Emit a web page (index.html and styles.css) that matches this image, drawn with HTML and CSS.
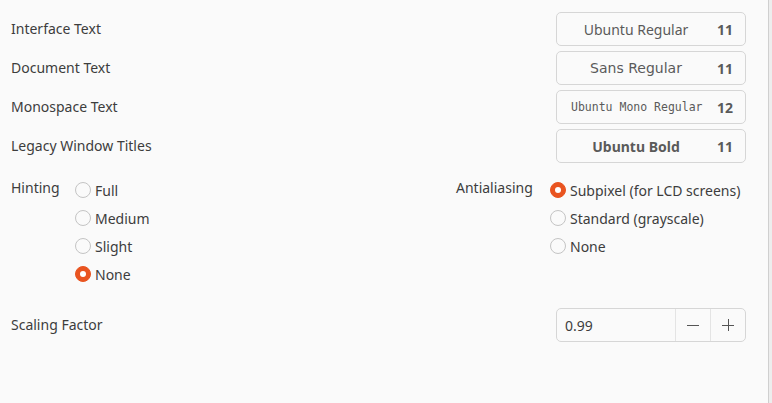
FILE: index.html
```html
<!DOCTYPE html>
<html>
<head>
<meta charset="utf-8">
<link rel="stylesheet" href="styles.css">
</head>
<body>
<div class="page">
  <div class="content">
    <div class="fonts">
      <div class="row">
        <span class="label">Interface Text</span>
        <button class="fontbtn"><span class="fname f-ui">Ubuntu Regular</span><span class="fsize">11</span></button>
      </div>
      <div class="row">
        <span class="label">Document Text</span>
        <button class="fontbtn"><span class="fname f-sans">Sans Regular</span><span class="fsize">11</span></button>
      </div>
      <div class="row">
        <span class="label">Monospace Text</span>
        <button class="fontbtn"><span class="fname f-mono">Ubuntu Mono Regular</span><span class="fsize">12</span></button>
      </div>
      <div class="row">
        <span class="label">Legacy Window Titles</span>
        <button class="fontbtn"><span class="fname f-bold">Ubuntu Bold</span><span class="fsize">11</span></button>
      </div>
    </div>
    <div class="options">
      <div class="group hinting">
        <span class="glabel">Hinting</span>
        <div class="radios">
          <label class="radio"><span class="dot"></span>Full</label>
          <label class="radio"><span class="dot"></span>Medium</label>
          <label class="radio"><span class="dot"></span>Slight</label>
          <label class="radio"><span class="dot on"></span>None</label>
        </div>
      </div>
      <div class="group aa">
        <span class="glabel">Antialiasing</span>
        <div class="radios">
          <label class="radio"><span class="dot on"></span>Subpixel (for LCD screens)</label>
          <label class="radio"><span class="dot"></span>Standard (grayscale)</label>
          <label class="radio"><span class="dot"></span>None</label>
        </div>
      </div>
    </div>
    <div class="row scale">
      <span class="label">Scaling Factor</span>
      <div class="spin">
        <span class="value">0.99</span>
        <span class="sbtn"><svg width="12" height="12" viewBox="0 0 12 12"><path d="M0 6.5h12" stroke="#555" stroke-width="1"/></svg></span>
        <span class="sbtn"><svg width="12" height="12" viewBox="0 0 12 12"><path d="M0 6.5h12M6.5 0v12" stroke="#555" stroke-width="1"/></svg></span>
      </div>
    </div>
  </div>
  <div class="edge"></div>
</div>
</body>
</html>
```
FILE: styles.css
```css
html, body {
  margin: 0;
  padding: 0;
}
body {
  background: #fafafa;
  font-family: "Noto Sans", "Open Sans", sans-serif;
  font-size: 14px;
  color: #3d3d3d;
  width: 772px;
  height: 403px;
  overflow: hidden;
}
.page {
  display: flex;
  height: 403px;
}
.content {
  width: 768px;
  box-sizing: border-box;
  padding: 12px 22px 0 11px;
}
.edge {
  width: 3px;
  border-left: 1px solid #cfcfcf;
  background: #ededed;
}
.fonts {
  display: flex;
  flex-direction: column;
  gap: 5px;
}
.row {
  display: flex;
  justify-content: space-between;
  align-items: center;
  height: 34px;
}
.label {
  line-height: 20px;
}
.fontbtn {
  width: 190px;
  height: 34px;
  box-sizing: border-box;
  border: 1px solid #d6d6d6;
  border-radius: 5px;
  background: #fafafa;
  display: flex;
  align-items: center;
  justify-content: flex-end;
  padding: 0 12px 0 10px;
  gap: 0;
  color: #5a5a5a;
  font-family: "Noto Sans", sans-serif;
  font-size: 14px;
}
.fname {
  flex: 1;
  text-align: center;
  padding-right: 8px;
}
.f-sans {
  font-family: "DejaVu Sans", sans-serif;
  font-size: 14px;
}
.f-mono {
  font-family: "DejaVu Sans Mono", monospace;
  font-size: 11.5px;
  text-align: left;
  padding-left: 4px;
}
.f-bold {
  font-weight: bold;
}
.fsize {
  font-weight: bold;
  width: 20px;
  text-align: right;
}
.options {
  display: flex;
  margin-top: 17px;
}
.group {
  display: flex;
  align-items: flex-start;
}
.hinting {
  width: 445px;
}
.glabel {
  line-height: 20px;
  margin-top: -2px;
}
.hinting .glabel {
  width: 64px;
}
.aa .glabel {
  width: 94px;
}
.radios {
  display: flex;
  flex-direction: column;
  gap: 8px;
}
.radio {
  display: flex;
  align-items: center;
  height: 20px;
  gap: 4px;
}
.dot {
  width: 16px;
  height: 16px;
  box-sizing: border-box;
  border: 1px solid #c4c4c4;
  border-radius: 50%;
  background: #fafafa;
  display: inline-flex;
  align-items: center;
  justify-content: center;
}
.dot.on {
  border-color: #e95420;
  background: #e95420;
}
.dot.on::after {
  content: "";
  width: 6px;
  height: 6px;
  border-radius: 50%;
  background: #fff;
}
.scale {
  margin-top: 24px;
}
.spin {
  width: 190px;
  height: 34px;
  box-sizing: border-box;
  border: 1px solid #d6d6d6;
  border-radius: 5px;
  display: flex;
  align-items: stretch;
}
.value {
  flex: 1;
  padding-left: 8px;
  display: flex;
  align-items: center;
  color: #3d3d3d;
}
.sbtn {
  width: 34px;
  border-left: 1px solid #e4e4e4;
  display: flex;
  align-items: center;
  justify-content: center;
}
```
